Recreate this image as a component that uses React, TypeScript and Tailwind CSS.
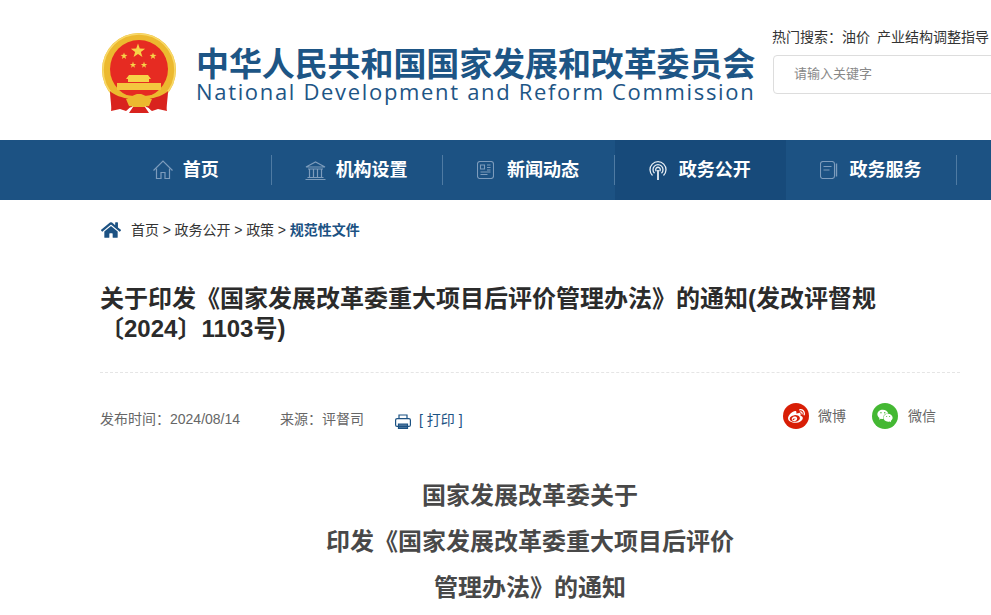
import { FaHome, FaWeibo, FaWeixin } from 'react-icons/fa';

const font = 'font-["Liberation_Sans","Noto_Sans_CJK_SC",sans-serif]';

function Star({ x, y, r }: { x: number; y: number; r: number }) {
  const pts: string[] = [];
  for (let i = 0; i < 10; i++) {
    const a = (Math.PI / 5) * i - Math.PI / 2;
    const d = i % 2 === 0 ? r : r * 0.4;
    pts.push(`${x + d * Math.cos(a)},${y + d * Math.sin(a)}`);
  }
  return <polygon points={pts.join(' ')} fill="#f7d348" />;
}

function Emblem() {
  return (
    <svg width="78" height="81" viewBox="0 0 78 81" className="shrink-0">
      <circle cx="39" cy="37" r="37" fill="#ecb92f" />
      <circle cx="39" cy="37" r="36" fill="none" stroke="#f8d968" strokeWidth="1.6" />
      <circle cx="39" cy="36" r="29" fill="#e62b22" />
      <Star x={38} y={18} r={7.5} />
      <Star x={24} y={23} r={3.6} />
      <Star x={53} y={23} r={3.6} />
      <Star x={33} y={32} r={3.4} />
      <Star x={44} y={32} r={3.4} />
      <path d="M29 42h19l3 4h-2v3H28v-3h-2z" fill="#f7d348" />
      <path d="M17 50h44v7H17z" fill="#f4c63f" />
      <path d="M11 58c8 3 18 5 28 5s20-2 28-5l-2 6c-8 2-17 4-26 4s-18-2-26-4z" fill="#ecb92f" />
      <path d="M10 58c4 4 12 7 21 8l1 8c-3 0-4 3-6 4l-6-2-9 2c1-3-1-14-1-20z" fill="#d9231e" />
      <path d="M68 58c-4 4-12 7-21 8l-1 8c3 0 4 3 6 4l6-2 9 2c-1-3 1-14 1-20z" fill="#d9231e" />
      <path d="M26 66c3 0 3-3 6-3 2 0 2-2 7-2s5 2 7 2c3 0 3 3 6 3l-3 7c-4 0-6 2-10 2s-6-2-10-2z" fill="#ecb92f" />
      <path d="M33 74h12l4 6H29z" fill="#d9231e" />
    </svg>
  );
}

function HomeIcon() {
  return (
    <svg width="20" height="20" viewBox="0 0 20 20" fill="none" stroke="#7d9cbc" strokeWidth="1.2">
      <path d="M0.5 10.5L10 1l9.5 9.5" />
      <path d="M3.5 8.5V18.5h4.5V12.5h4V18.5h4.5V8.5" />
    </svg>
  );
}

function BankIcon() {
  return (
    <svg width="21" height="19" viewBox="0 0 21 19" fill="none" stroke="#7d9cbc" strokeWidth="1.2">
      <path d="M1 6L10.5 1 20 6z" />
      <path d="M3 8h15M4.5 8v8M8.5 8v8M12.5 8v8M16.5 8v8M2.5 16.5h16M0.5 18.5h20" />
    </svg>
  );
}

function NewsIcon() {
  return (
    <svg width="17" height="18" viewBox="0 0 17 18" fill="none" stroke="#7d9cbc" strokeWidth="1.1">
      <rect x="0.5" y="0.5" width="16" height="17" rx="2.5" />
      <path d="M3.5 4h4v4h-4zM10 4h3.5M10 6.5h3.5M10 9h3.5M3.5 11h10M3.5 13.5h7" />
    </svg>
  );
}

function SignalIcon() {
  return (
    <svg width="18" height="19" viewBox="0 0 18 19" fill="none" stroke="#e6edf4" strokeWidth="1.3">
      <path d="M3.5 14.5a8 8 0 1 1 11 0" />
      <path d="M5.5 12.2a5 5 0 1 1 7 0" />
      <path d="M7.4 10.2a2.3 2.3 0 1 1 3.2 0" />
      <path d="M9 9v10" strokeWidth="1.8" />
    </svg>
  );
}

function BookIcon() {
  return (
    <svg width="18" height="18" viewBox="0 0 18 18" fill="none" stroke="#7d9cbc" strokeWidth="1.1">
      <rect x="0.5" y="0.5" width="14" height="17" rx="2.5" />
      <path d="M3.5 5.5h8M3.5 9h6" />
      <path d="M16.5 2.5v13" strokeWidth="1.4" />
    </svg>
  );
}

function PrintIcon() {
  return (
    <svg width="16" height="15" viewBox="0 0 16 15" fill="none" stroke="#1c5283" strokeWidth="1.2" className="ml-[31px] mt-[3px] shrink-0">
      <path d="M4 4.5V1h8v3.5" />
      <rect x="0.6" y="4.6" width="14.8" height="7.8" rx="1.5" />
      <path d="M3.5 10h9v4.4h-9z" fill="#1c5283" fillOpacity="0.75" />
    </svg>
  );
}

const navItems = [
  { label: '首页', icon: <HomeIcon />, cell: 'gap-[10px] pr-[1px]' },
  { label: '机构设置', icon: <BankIcon />, cell: 'gap-[10px] pr-[3px]' },
  { label: '新闻动态', icon: <NewsIcon />, cell: 'gap-[13px] pr-[2px]' },
  { label: '政务公开', icon: <SignalIcon />, cell: 'gap-[12px] pr-[1px] bg-[#174a7a]', active: true },
  { label: '政务服务', icon: <BookIcon />, cell: 'gap-[12px] pr-[2px]' },
];

export default function App() {
  return (
    <div className={`w-[991px] h-[615px] overflow-hidden bg-white ${font}`}>
      <header className="h-[140px] flex pl-[100px] pt-[33px]">
        <Emblem />
        <div className="ml-[18px] w-[560px] shrink-0 pt-[15px]">
          <div className="text-[33px] leading-[33px] font-bold text-[#1d5585] whitespace-nowrap tracking-[-0.1px]">
            中华人民共和国国家发展和改革委员会
          </div>
          <div className="text-[22px] leading-[20px] text-[#1d5585] whitespace-nowrap tracking-[1.67px] font-['Open_Sans',sans-serif]">
            National Development and Reform Commission
          </div>
        </div>
        <div className="ml-[16px] w-[240px] shrink-0 -mt-[5px]">
          <div className="text-[14px] leading-[18px] text-[#333] whitespace-nowrap">
            热门搜索：油价<span className="ml-[7px]">产业结构调整指导</span>
          </div>
          <div className="mt-[9px] h-[39px] w-[300px] ml-[1px] border border-[#ddd] rounded-[4px] pl-[20px] pb-[2px] flex items-center text-[13px] text-[#888]">
            请输入关键字
          </div>
        </div>
      </header>

      <nav className="h-[60px] bg-[#1c5283] pl-[100.7px] flex">
        {navItems.map((item) => (
          <div
            key={item.label}
            className={`relative w-[171.3px] h-full flex items-center justify-center ${item.cell}`}
          >
            {item.icon}
            <span className="text-[18px] font-bold text-white whitespace-nowrap">{item.label}</span>
            {!item.active && <span className="absolute right-0 top-[15px] h-[30px] w-px bg-[#4f7ba3]" />}
          </div>
        ))}
      </nav>

      <div className="pl-[100px] w-[960px]">
        <div className="h-[60px] flex items-center text-[14px] text-[#333]">
          <FaHome className="text-[#1c5283] text-[20px] ml-[1px] mr-[10px]" />
          <span>首页</span>
          <span className="mx-[3.7px]">&gt;</span>
          <span>政务公开</span>
          <span className="mx-[3.7px]">&gt;</span>
          <span>政策</span>
          <span className="mx-[3.7px]">&gt;</span>
          <span className="text-[#1c5283] font-bold">规范性文件</span>
        </div>

        <h1 className="mt-[24px] text-[24px] leading-[30px] font-bold text-[#2b2b2b]">
          关于印发《国家发展改革委重大项目后评价管理办法》的通知(发改评督规〔2024〕1103号)
        </h1>

        <div className="mt-[28px] border-t border-dashed border-[#e5e5e5]" />

        <div className="mt-[25px] h-[40px] flex items-start justify-between">
          <div className="flex items-center h-[40px] pt-[3px] text-[14px] text-[#666] whitespace-nowrap">
            <span>发布时间：2024/08/14</span>
            <span className="ml-[40px]">来源：评督司</span>
            <PrintIcon />
            <span className="ml-[8px] mt-[1px] text-[#1c5283]">[ 打印 ]</span>
          </div>
          <div className="flex items-center h-[26px] mt-[5px] text-[14px] text-[#666] mr-[24px]">
            <span className="w-[26px] h-[26px] rounded-full bg-[#d81e06] flex items-center justify-center">
              <FaWeibo className="text-white text-[17px]" />
            </span>
            <span className="ml-[9px]">微博</span>
            <span className="ml-[26px] w-[26px] h-[26px] rounded-full bg-[#44b833] flex items-center justify-center">
              <FaWeixin className="text-white text-[16px]" />
            </span>
            <span className="ml-[10px]">微信</span>
          </div>
        </div>

        <div className="mt-[35px] text-center text-[24px] leading-[46px] font-bold text-[#484848]">
          <div>国家发展改革委关于</div>
          <div>印发《国家发展改革委重大项目后评价</div>
          <div>管理办法》的通知</div>
        </div>
      </div>
    </div>
  );
}
